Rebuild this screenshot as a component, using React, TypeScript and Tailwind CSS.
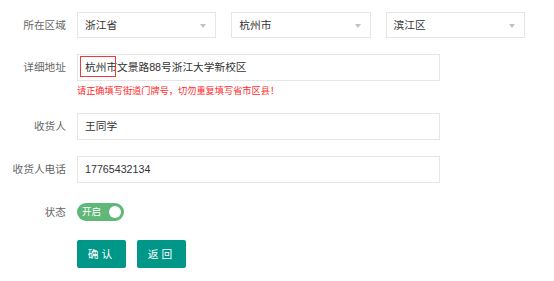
import React from "react";

const font = { fontFamily: '"Liberation Sans", "Noto Sans CJK SC", sans-serif' };

function Select({ value }: { value: string }) {
	return (
		<div className="relative flex h-[26px] w-[139.3px] items-center border border-[#e6e6e6] bg-white pl-[7px] text-[10.7px] text-[#333]">
			<span>{value}</span>
			<span className="absolute right-[9px] top-[11px] h-0 w-0 border-x-[3.5px] border-t-[4px] border-x-transparent border-t-[#c2c2c2]" />
		</div>
	);
}

function Row({ label, children, className = "" }: { label: string; children: React.ReactNode; className?: string }) {
	return (
		<div className={`flex items-center ${className}`}>
			<label className="w-[66px] shrink-0 text-right text-[10.7px] text-[#666]">{label}</label>
			<div className="ml-[11px] flex items-center">{children}</div>
		</div>
	);
}

function Input({ value }: { value: string }) {
	return (
		<div className="flex h-[27px] w-[363px] items-center border border-[#e6e6e6] bg-white pl-[7px] text-[10.7px] text-[#333]">
			{value}
		</div>
	);
}

export default function App() {
	return (
		<div className="h-[281px] w-[554px] bg-white pt-[12px]" style={font}>
			<Row label="所在区域">
				<div className="flex gap-[15px]">
					<Select value="浙江省" />
					<Select value="杭州市" />
					<Select value="滨江区" />
				</div>
			</Row>

			<div className="mt-[16px] flex">
				<label className="flex h-[27px] w-[66px] shrink-0 items-center justify-end text-[10.7px] text-[#666]">详细地址</label>
				<div className="ml-[11px]">
					<div className="relative">
						<Input value="杭州市文景路88号浙江大学新校区" />
						<span className="absolute left-[3px] top-[2px] h-[21px] w-[36px] border border-[#f03a3a]" />
					</div>
					<p className="mt-[3px] text-[9.2px] leading-[14px] text-[#ff2a2a]">请正确填写街道门牌号，切勿重复填写省市区县！</p>
				</div>
			</div>

			<Row label="收货人" className="mt-[15px]">
				<Input value="王同学" />
			</Row>

			<Row label="收货人电话" className="mt-[16px]">
				<Input value="17765432134" />
			</Row>

			<Row label="状态" className="mt-[20px] h-[18px]">
				<div className="flex h-[18px] w-[47px] items-center justify-between rounded-full bg-[#5fb878] pl-[5px] pr-[3px] text-[9.5px] text-white">
					<span>开启</span>
					<span className="h-[12px] w-[12px] rounded-full bg-white" />
				</div>
			</Row>

			<div className="ml-[77px] mt-[19px] flex gap-[11px]">
				<button className="h-[28px] w-[49px] rounded-[2px] bg-[#009688] text-[10.7px] tracking-[3px] text-white">确认</button>
				<button className="h-[28px] w-[49px] rounded-[2px] bg-[#009688] text-[10.7px] tracking-[3px] text-white">返回</button>
			</div>
		</div>
	);
}
